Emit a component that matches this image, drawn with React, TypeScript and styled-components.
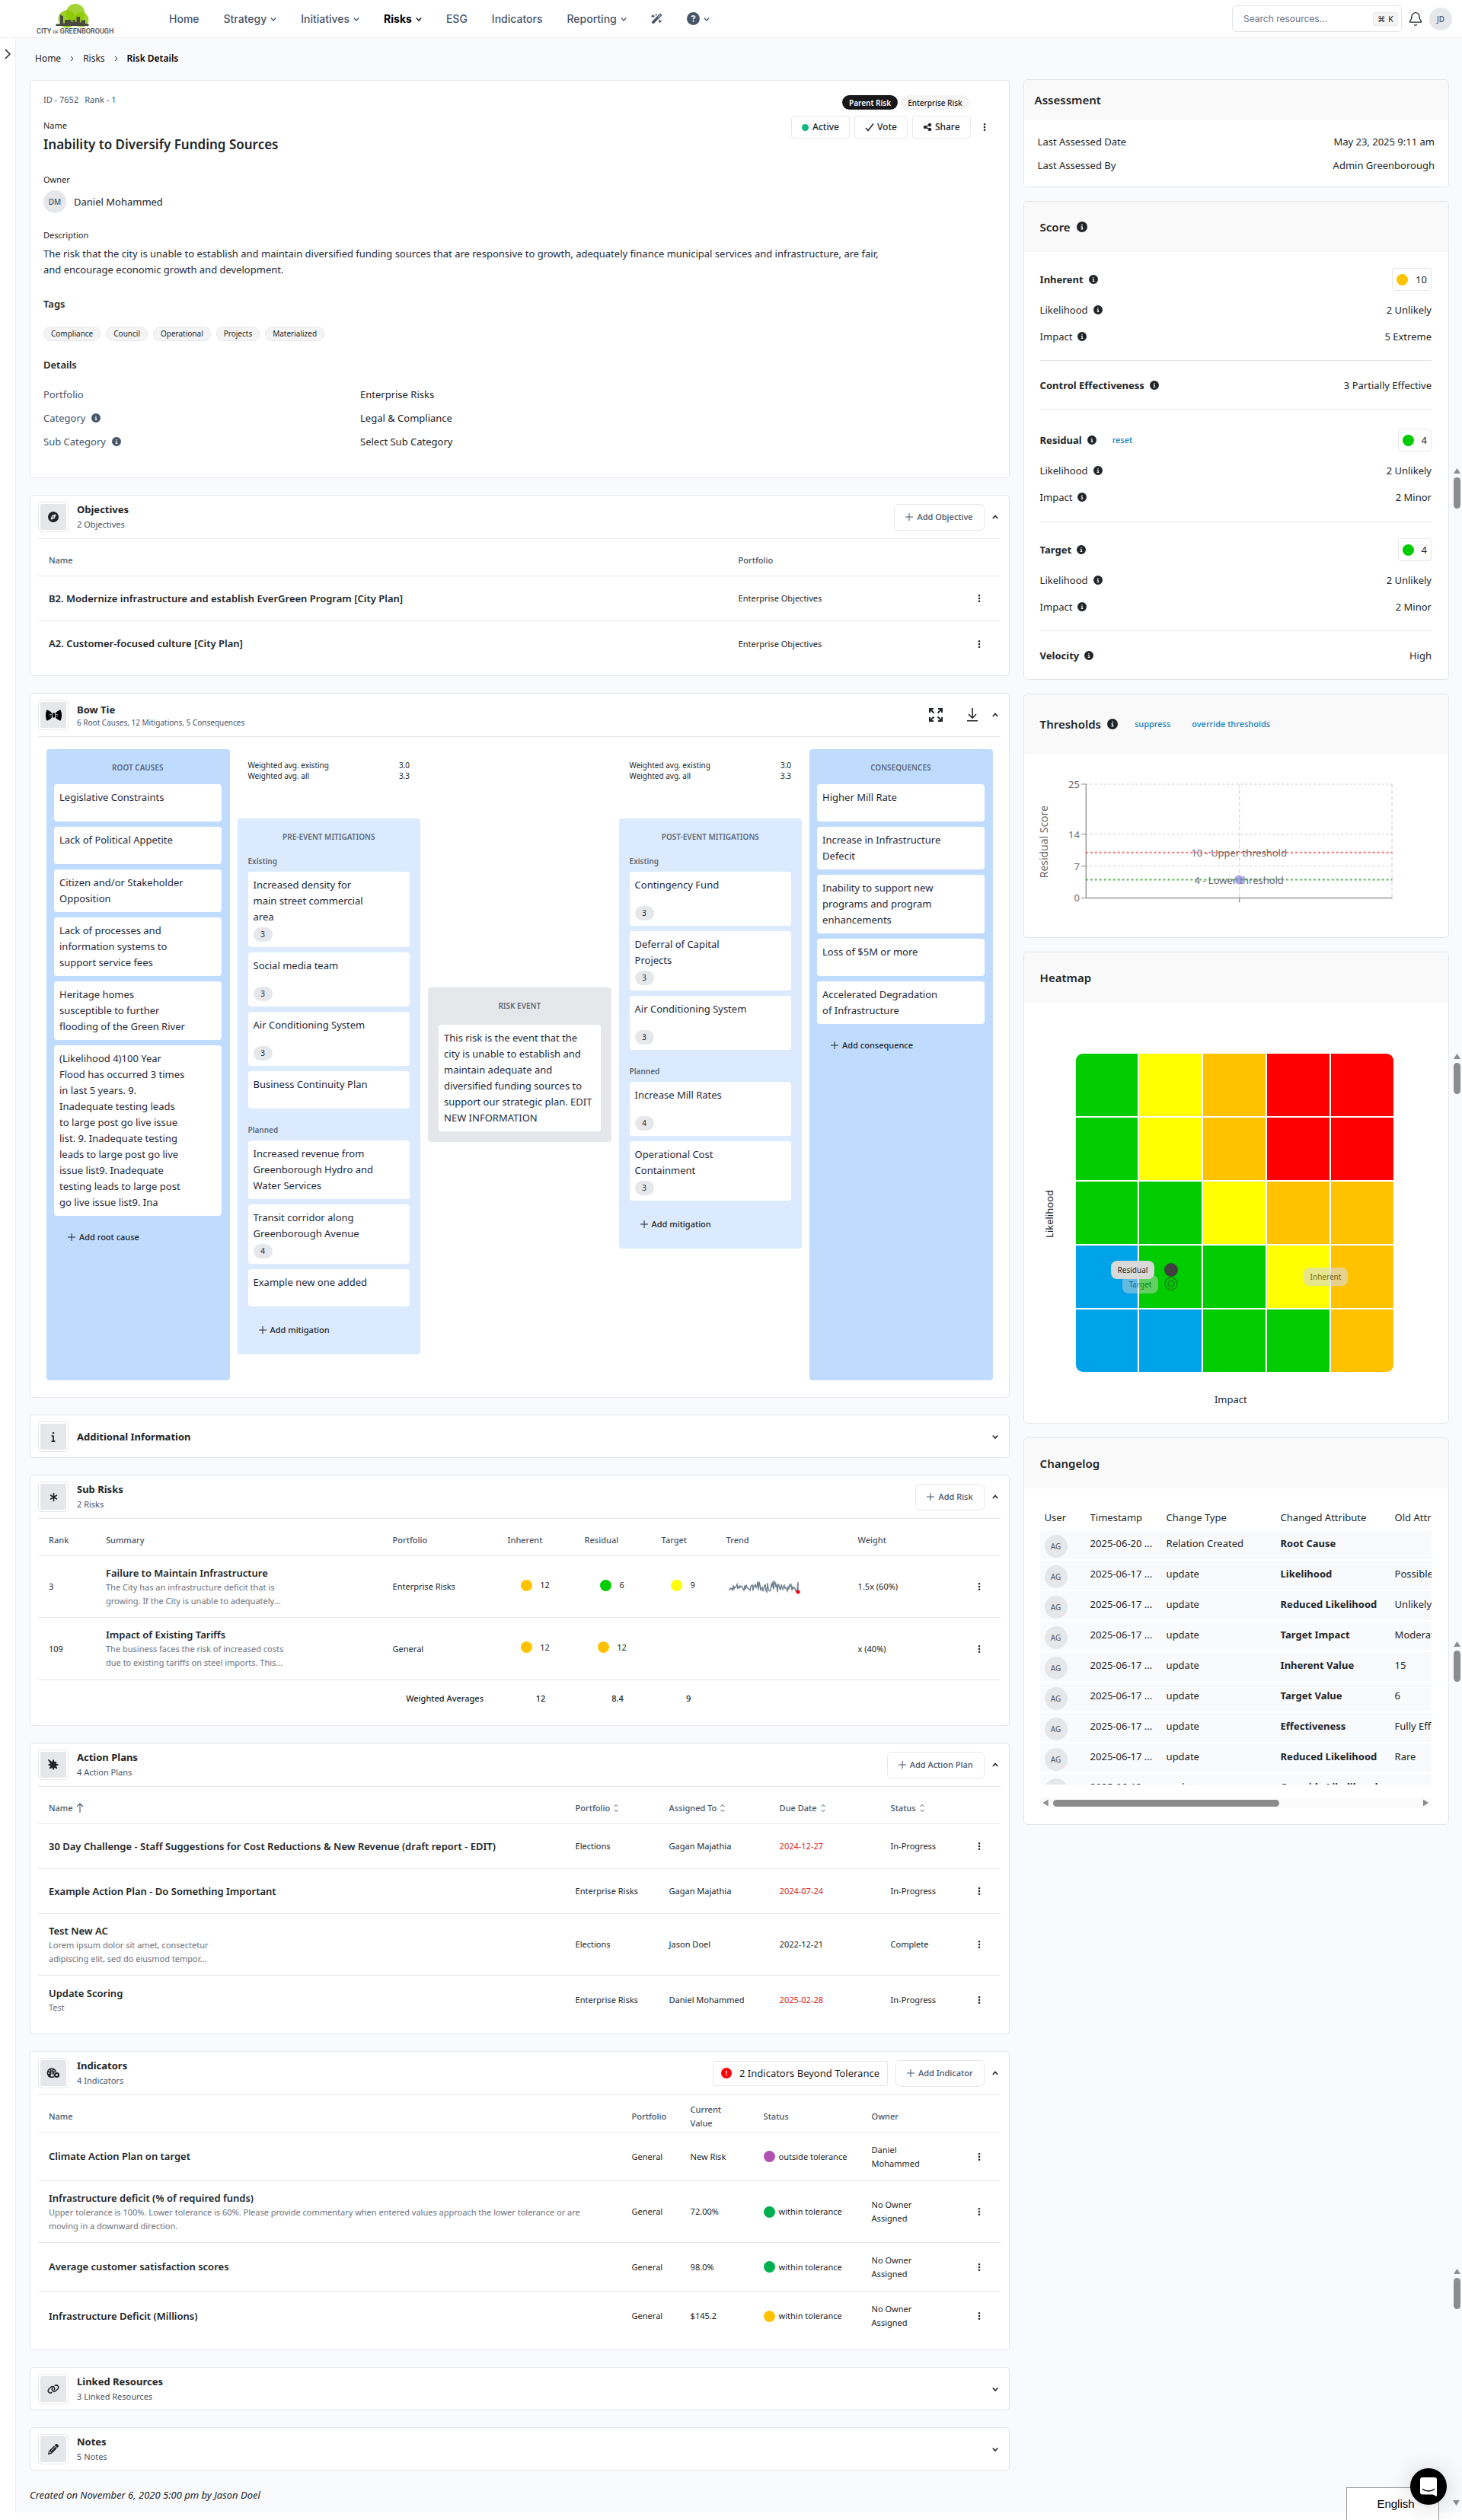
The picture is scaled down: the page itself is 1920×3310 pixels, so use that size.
import React from 'react';
import styled, { createGlobalStyle, css } from 'styled-components';
import {
  FaAsterisk,
  FaBurst,
  FaCircleExclamation,
  FaCircleInfo,
  FaCircleQuestion,
  FaCompass,
  FaEllipsisVertical,
  FaInfo,
  FaLink,
  FaPencil,
  FaShareNodes,
  FaWandMagicSparkles,
} from 'react-icons/fa6';
import { Bell } from 'lucide-react';

/* ---------- theme ---------- */

const c = {
  ink: '#212529',
  slate: '#475569',
  muted: '#6b7280',
  line: '#e5e7eb',
  page: '#f9fafc',
  link: '#0f80c1',
  gray: '#e5e7eb',
  green: '#00cc00',
  yellow: '#ffff00',
  amber: '#ffc200',
  red: '#ff0000',
  blue: '#00a2e8',
};

const GlobalStyle = createGlobalStyle`
  *, *::before, *::after { box-sizing: border-box; }
  body {
    margin: 0;
    background: #fff;
    color: ${c.ink};
    font-family: 'Noto Sans', 'Open Sans', sans-serif;
    font-size: 13px;
    line-height: 20px;
  }
  h1, h2, h3, p, dl, dd, ul { margin: 0; padding: 0; }
  ul { list-style: none; }
  a { color: inherit; text-decoration: none; }
  button, input { font: inherit; color: inherit; }
  svg { display: block; flex: none; }
`;

/* ---------- header ---------- */

const TopBar = styled.header`
  display: flex;
  align-items: center;
  height: 50px;
  padding: 0 13px 0 47px;
  background: #fff;
  border-bottom: 1px solid #eceef1;
`;

const NavList = styled.nav`
  display: flex;
  align-items: center;
  gap: 32px;
  margin-left: 75px;
  font-family: Inter, 'Liberation Sans', sans-serif;
  font-size: 14px;
  font-weight: 500;
  color: ${c.slate};
`;

const NavLink = styled.a<{ $active?: boolean }>`
  display: flex;
  align-items: center;
  gap: 5px;
  ${(p) => p.$active && css`color: #000; font-weight: 700;`}
`;

const TopTools = styled.div`
  display: flex;
  align-items: center;
  gap: 8px;
  margin-left: auto;
`;

const SearchBox = styled.label`
  display: flex;
  align-items: center;
  width: 223px;
  height: 35px;
  padding: 0 4px 0 14px;
  border: 1px solid #e2e4e8;
  border-radius: 6px;
  background: #fff;
`;

const SearchInput = styled.input`
  flex: 1;
  min-width: 0;
  padding: 0;
  border: 0;
  outline: 0;
  background: none;
  font-family: Inter, sans-serif;
  font-size: 12px;
  &::placeholder { color: #6b7280; opacity: 1; }
`;

const Shortcut = styled.kbd`
  display: flex;
  align-items: center;
  gap: 4px;
  height: 18px;
  padding: 0 5px;
  border: 1px solid ${c.line};
  border-radius: 3px;
  background: #f4f4f5;
  font-family: Inter, sans-serif;
  font-size: 10px;
`;

const IconButton = styled.button`
  display: inline-flex;
  align-items: center;
  justify-content: center;
  padding: 0;
  border: 0;
  background: none;
  cursor: pointer;
`;

const Avatar = styled.span<{ $small?: boolean }>`
  display: inline-flex;
  align-items: center;
  justify-content: center;
  flex: none;
  width: 30px;
  height: 30px;
  border-radius: 50%;
  background: #e5e7eb;
  color: ${(p) => (p.$small ? '#555' : c.slate)};
  font-size: 10px;
  font-weight: ${(p) => (p.$small ? 400 : 500)};
  line-height: 12px;
`;

/* ---------- page frame ---------- */

const Frame = styled.div`
  display: flex;
  background: ${c.page};
  margin-bottom: 10px;
`;

const Rail = styled.aside`
  flex: none;
  width: 21px;
  padding-top: 13px;
  background: #fff;
  border-right: 1px solid #eceef1;
  text-align: center;
`;

const Content = styled.main`
  flex: 1;
  min-width: 0;
  padding: 0 17px 13px 18px;
`;

const Crumbs = styled.nav`
  display: flex;
  align-items: center;
  gap: 12px;
  height: 54px;
  padding-left: 7px;
  font-size: 12px;
  color: #111827;
`;

const CrumbHere = styled.span`
  font-weight: 600;
  color: #000;
`;

const Columns = styled.div`
  display: grid;
  grid-template-columns: minmax(0, 23fr) minmax(0, 10fr);
  gap: 18px;
  align-items: start;
`;

const MainCol = styled.div`
  display: flex;
  flex-direction: column;
  gap: 22px;
  padding-top: 1px;
`;

const SideCol = styled.div`
  display: flex;
  flex-direction: column;
  gap: 18px;
`;

const Card = styled.section`
  background: #fff;
  border: 1px solid ${c.line};
  border-radius: 5px;
`;

/* ---------- summary card ---------- */

const Summary = styled(Card)`
  padding: 15px 17px 32px;
`;

const SummaryTop = styled.div`
  display: flex;
  justify-content: space-between;
`;

const MetaLine = styled.p`
  display: flex;
  gap: 8px;
  color: ${c.slate};
  font-size: 11px;
`;

const FieldLabel = styled.p<{ $gap: number }>`
  margin-top: ${(p) => p.$gap}px;
  font-size: 11px;
`;

const RiskTitle = styled.h1`
  margin-top: 3px;
  font-size: 17px;
  font-weight: 600;
  line-height: 24px;
`;

const Actions = styled.div`
  display: flex;
  flex-direction: column;
  align-items: flex-end;
  gap: 8px;
  padding: 4px 3px 0 0;
`;

const PillRow = styled.div`
  display: flex;
  gap: 4px;
  padding-right: 32px;
`;

const Pill = styled.span<{ $dark?: boolean }>`
  display: inline-flex;
  align-items: center;
  height: 19px;
  padding: 0 9px;
  border-radius: 10px;
  background: ${(p) => (p.$dark ? '#18181b' : '#f4f4f5')};
  color: ${(p) => (p.$dark ? '#fff' : '#18181b')};
  font-size: 10px;
  font-weight: ${(p) => (p.$dark ? 600 : 500)};
`;

const ButtonRow = styled.div`
  display: flex;
  align-items: center;
  gap: 6px;
`;

const SmallButton = styled.button`
  display: flex;
  align-items: center;
  gap: 4px;
  height: 30px;
  padding: 0 13px;
  border: 1px solid ${c.line};
  border-radius: 4px;
  background: #fff;
  font-size: 12px;
  font-weight: 500;
  cursor: pointer;
`;

const StatusDot = styled.span`
  width: 9px;
  height: 9px;
  margin-right: 1px;
  border-radius: 50%;
  background: #10b981;
`;

const MoreButton = styled(IconButton)`
  width: 24px;
  height: 24px;
`;

const OwnerRow = styled.div`
  display: flex;
  align-items: center;
  gap: 10px;
  margin-top: 4px;
`;

const Description = styled.p`
  max-width: 1115px;
  margin-top: 4px;
  color: #1e293b;
  line-height: 21px;
`;

const SmallHeading = styled.h2<{ $gap: number }>`
  margin-top: ${(p) => p.$gap}px;
  font-size: 13px;
  font-weight: 600;
`;

const ChipList = styled.ul`
  display: flex;
  gap: 7px;
  margin-top: 20px;
`;

const Chip = styled.li`
  height: 19px;
  padding: 0 9px;
  border: 1px solid ${c.line};
  border-radius: 10px;
  background: #f4f4f5;
  font-size: 10px;
  line-height: 17px;
`;

const DetailList = styled.dl`
  display: grid;
  grid-template-columns: 416px 1fr;
  grid-auto-rows: 31px;
  align-items: center;
  margin-top: 13px;
`;

const Term = styled.dt`
  display: flex;
  align-items: center;
  gap: 8px;
  color: ${c.slate};
`;

/* ---------- collapsible panel ---------- */

const Panel = styled(Card)<{ $open?: boolean }>`
  padding: 0 11px ${(p) => (p.$open ? 12 : 0)}px 10px;
`;

const PanelHead = styled.div<{ $open?: boolean }>`
  display: flex;
  align-items: center;
  gap: 11px;
  padding: 8px 0 ${(p) => (p.$open ? 8 : 7)}px;
  ${(p) => p.$open && css`border-bottom: 1px solid ${c.line};`}
`;

const IconTile = styled.span`
  display: flex;
  flex: none;
  align-items: center;
  justify-content: center;
  width: 40px;
  height: 40px;
  border: 1px solid ${c.line};
  border-radius: 5px;
  background: #e5e7eb;
  box-shadow: inset 0 0 0 2px #fff;
`;

const PanelTitle = styled.h2`
  font-size: 13px;
  font-weight: 700;
`;

const PanelNote = styled.p<{ $tight?: boolean }>`
  font-size: ${(p) => (p.$tight ? 10 : 11)}px;
  line-height: ${(p) => (p.$tight ? 15 : 20)}px;
  color: ${c.slate};
`;

const PanelTools = styled.div`
  display: flex;
  align-items: center;
  gap: 8px;
  margin-left: auto;
`;

const AddButton = styled.button`
  display: flex;
  align-items: center;
  gap: 5px;
  height: 35px;
  padding: 0 14px;
  border: 1px solid ${c.line};
  border-radius: 6px;
  background: #fff;
  color: ${c.slate};
  font-size: 11px;
  font-weight: 500;
  cursor: pointer;
`;

const AlertTag = styled.span`
  display: flex;
  align-items: center;
  gap: 10px;
  height: 33px;
  margin-right: 2px;
  padding: 0 10px;
  border: 1px solid ${c.line};
  border-radius: 3px;
  font-size: 13px;
`;

const Toggle = styled(IconButton)`
  width: 13px;
  height: 24px;
`;

const ToolIcon = styled(IconButton)`
  width: 32px;
  height: 32px;
  margin-right: 8px;
  &:nth-child(2) { margin-right: 0; }
`;

/* ---------- tables ---------- */

const Grid = styled.table`
  width: 100%;
  table-layout: fixed;
  border-collapse: separate;
  border-spacing: 0;
  font-size: 11px;
  line-height: 18px;
`;

const Col = styled.col<{ $w?: string }>`
  width: ${(p) => p.$w ?? 'auto'};
`;

const Th = styled.th`
  height: 49px;
  padding: 7px 14px 0;
  border-bottom: 1px solid ${c.line};
  color: ${c.slate};
  font-weight: 500;
  text-align: left;
`;

const Td = styled.td<{ $h: number; $last?: boolean; $center?: boolean }>`
  height: ${(p) => p.$h}px;
  padding: 0 ${(p) => (p.$center ? 0 : 14)}px;
  text-align: ${(p) => (p.$center ? 'center' : 'left')};
  ${(p) => !p.$last && css`border-bottom: 1px solid ${c.line};`}
`;

const FootTd = styled.td`
  height: 47px;
  padding: 0 0 0 14px;
  font-weight: 500;
  text-align: center;
`;

const RowName = styled.a`
  font-size: 13px;
  font-weight: 600;
`;

const RowNote = styled.p<{ $w?: number }>`
  max-width: ${(p) => (p.$w ? `${p.$w}px` : 'none')};
  color: ${c.muted};
`;

const RedText = styled.span`
  color: #dc2626;
`;

const OwnerName = styled.span`
  white-space: pre-line;
`;

const SortLabel = styled.span`
  display: flex;
  align-items: center;
  gap: 4px;
`;

const Score = styled.span`
  display: inline-flex;
  align-items: center;
  gap: 10px;
`;

const Dot = styled.span<{ $color: string }>`
  flex: none;
  width: 15px;
  height: 15px;
  border-radius: 50%;
  background: ${(p) => p.$color};
`;

const StatusCell = styled.span`
  display: flex;
  align-items: center;
  gap: 5px;
  white-space: nowrap;
`;

/* ---------- bow tie ---------- */

const Board = styled.div`
  display: grid;
  grid-template-columns: repeat(5, minmax(0, 1fr));
  gap: 10px;
  padding: 16px 10px 10px 11px;
`;

const Lane = styled.div<{ $tone: 'strong' | 'soft' | 'gray' }>`
  padding: ${(p) => (p.$tone === 'strong' ? '14px 11px 14px 10px' : '14px')};
  border-radius: 4px;
  background: ${(p) => ({ strong: '#bfdbfe', soft: '#dbeafe', gray: '#e5e7eb' })[p.$tone]};
  ${(p) => p.$tone === 'gray' && css`align-self: center;`}
`;

const SplitLane = styled.div`
  padding-bottom: 34px;
`;

const LaneTitle = styled.h3<{ $gap: number }>`
  margin-bottom: ${(p) => p.$gap}px;
  color: #5f6b7a;
  font-size: 10px;
  font-weight: 600;
  text-align: center;
`;

const LaneGroup = styled.p<{ $first?: boolean }>`
  margin: ${(p) => (p.$first ? 0 : 18)}px 0 4px;
  color: #5f6b7a;
  font-size: 10px;
  font-weight: 600;
`;

const Averages = styled.dl`
  display: grid;
  grid-template-columns: 1fr auto;
  align-content: start;
  height: 91px;
  padding: 14px 14px 0;
  font-size: 10px;
  line-height: 14px;
`;

const NoteList = styled.ul`
  display: flex;
  flex-direction: column;
  gap: 7px;
`;

const Note = styled.li`
  padding: 7px;
  border-radius: 4px;
  background: #fff;
  color: #1e293b;
  line-height: 21px;
  white-space: pre-line;
`;

const NoteText = styled.p`
  min-height: 35px;
`;

const Count = styled.span`
  display: block;
  width: 25px;
  height: 19px;
  margin-top: 3px;
  border-radius: 10px;
  background: ${c.gray};
  font-size: 10px;
  line-height: 19px;
  text-align: center;
`;

const LaneAdd = styled.button<{ $wide?: boolean }>`
  display: flex;
  align-items: center;
  gap: 5px;
  height: 36px;
  margin-top: ${(p) => (p.$wide ? 10 : 13)}px;
  padding: 0 ${(p) => (p.$wide ? 18 : 14)}px;
  border: 0;
  background: none;
  font-size: 11px;
  font-weight: 500;
  cursor: pointer;
`;

/* ---------- side cards ---------- */

const SideHead = styled.div<{ $h: number; $indent?: number }>`
  display: flex;
  align-items: center;
  gap: 8px;
  height: ${(p) => p.$h}px;
  padding: 0 22px 0 ${(p) => p.$indent ?? 21}px;
  border-radius: 5px 5px 0 0;
  background: #f9f9f9;
`;

const SideTitle = styled.h2`
  font-size: 15px;
  font-weight: 600;
`;

const SideLink = styled.a`
  margin-left: 14px;
  color: ${c.link};
  font-size: 11px;
  font-weight: 500;
  & + & { margin-left: 20px; }
`;

const SideBody = styled.div`
  padding: 0 22px 0 21px;
`;

const AssessBody = styled.div`
  padding: 13px 18px 13px;
`;

const Pair = styled.div<{ $h: number }>`
  display: flex;
  align-items: center;
  justify-content: space-between;
  height: ${(p) => p.$h}px;
`;

const PairLabel = styled.span<{ $bold?: boolean }>`
  display: flex;
  align-items: center;
  gap: 7px;
  font-weight: ${(p) => (p.$bold ? 700 : 400)};
`;

const ScoreGroup = styled.div<{ $top: number; $bottom: number; $last?: boolean }>`
  padding: ${(p) => p.$top}px 0 ${(p) => p.$bottom}px;
  ${(p) => !p.$last && css`border-bottom: 1px solid ${c.line};`}
`;

const ScoreBadge = styled.span`
  display: flex;
  align-items: center;
  gap: 10px;
  height: 30px;
  padding: 0 5px;
  border: 1px solid ${c.line};
  border-radius: 4px;
`;

const ChartBox = styled.div`
  height: 241px;
  padding-top: 20px;
`;

const Heat = styled.div`
  display: grid;
  grid-template-columns: 24px 1fr;
  column-gap: 23px;
  padding: 67px 50px 0 0;
`;

const AxisY = styled.span`
  justify-self: center;
  align-self: center;
  padding-bottom: 2px;
  writing-mode: vertical-rl;
  transform: rotate(180deg);
`;

const AxisX = styled.p`
  grid-column: 2;
  padding: 26px 10px 21px 0;
  text-align: center;
`;

const HeatGrid = styled.div`
  position: relative;
  display: grid;
  grid-template-columns: repeat(5, 1fr);
  grid-auto-rows: 82px;
  gap: 2px;
  border-radius: 9px;
  overflow: hidden;
`;

const Cell = styled.span<{ $color: string }>`
  background: ${(p) => p.$color};
`;

const Marker = styled.span<{ $x: number; $y: number; $fade?: number }>`
  position: absolute;
  left: ${(p) => p.$x}px;
  top: ${(p) => p.$y}px;
  opacity: ${(p) => p.$fade ?? 1};
`;

const MarkerTag = styled(Marker)`
  padding: 2px 9px;
  border-radius: 8px;
  background: #d9d9d9;
  font-size: 10px;
`;

const LogView = styled.div`
  height: 389px;
  padding-top: 21px;
  overflow: hidden;
`;

const LogTable = styled.table`
  width: 700px;
  table-layout: fixed;
  border-collapse: separate;
  border-spacing: 0 2px;
`;

const LogTh = styled.th`
  height: 30px;
  padding: 0 6px;
  font-weight: 400;
  text-align: left;
  white-space: nowrap;
`;

const LogTd = styled.td<{ $bold?: boolean; $face?: boolean }>`
  height: 38px;
  padding: ${(p) => (p.$face ? 6 : 7)}px 6px 0;
  background: ${c.page};
  font-weight: ${(p) => (p.$bold ? 700 : 400)};
  line-height: ${(p) => (p.$face ? 0 : '20px')};
  vertical-align: top;
  white-space: nowrap;
`;

const ScrollTrack = styled.div`
  display: flex;
  align-items: center;
  gap: 6px;
  height: 14px;
  margin: 17px 0 21px;
  padding: 0 4px;
  background: #fbfbfb;
`;

const ScrollLane = styled.span`
  flex: 1;
`;

const ScrollBar = styled.span`
  display: block;
  width: 62%;
  height: 9px;
  border-radius: 5px;
  background: #8c8c8c;
`;

const Tri = styled.span<{ $dir: 'up' | 'down' | 'left' | 'right' }>`
  display: block;
  width: ${(p) => (p.$dir === 'up' || p.$dir === 'down' ? 9 : 7)}px;
  height: ${(p) => (p.$dir === 'up' || p.$dir === 'down' ? 7 : 9)}px;
  background: #8c8c8c;
  clip-path: ${(p) =>
    ({
      up: 'polygon(50% 0, 100% 100%, 0 100%)',
      down: 'polygon(0 0, 100% 0, 50% 100%)',
      left: 'polygon(100% 0, 100% 100%, 0 50%)',
      right: 'polygon(0 0, 100% 50%, 0 100%)',
    })[p.$dir]};
`;

/* ---------- page overlays ---------- */

const PageScroll = styled.div<{ $top: number }>`
  position: absolute;
  top: ${(p) => p.$top}px;
  right: 2px;
  display: flex;
  flex-direction: column;
  align-items: center;
  gap: 5px;
`;

const PageThumb = styled.span`
  width: 9px;
  height: 41px;
  border-radius: 5px;
  background: #8c8c8c;
`;

const ScrollEnd = styled.div`
  position: fixed;
  right: 3px;
  bottom: 19px;
`;

const Created = styled.p`
  font-size: 13px;
  font-style: italic;
`;

const Language = styled.button`
  position: fixed;
  right: 30px;
  bottom: -1px;
  width: 122px;
  height: 44px;
  padding: 0 0 0 8px;
  border: 1px solid #9a9a9a;
  background: #fff;
  color: #000;
  font-family: 'Liberation Sans', sans-serif;
  font-size: 15px;
`;

const Chat = styled.button`
  position: fixed;
  right: 20px;
  bottom: 20px;
  display: flex;
  align-items: center;
  justify-content: center;
  width: 48px;
  height: 48px;
  border: 0;
  border-radius: 50%;
  background: #000;
  box-shadow: 0 1px 6px rgba(0, 0, 0, 0.06), 0 2px 32px rgba(0, 0, 0, 0.16);
`;

/* ---------- drawings ---------- */

const LogoText = styled.text`
  font-family: 'Roboto', sans-serif;
  font-size: 9px;
  font-weight: 500;
  fill: #4a4a4a;
`;

const Logo = () => (
  <svg width="100" height="44" viewBox="0 0 100 44" overflow="visible" role="img" aria-label="City of Greenborough">
    <g fill="#8cc800">
      <circle cx="41" cy="22" r="11.5" opacity=".85" />
      <circle cx="52" cy="14.5" r="12.5" opacity=".8" />
      <circle cx="59.5" cy="23" r="10" opacity=".8" />
    </g>
    <path
      fill="#4a4a42"
      d="M27 28.5h5V16l4 2.5v9h2V23h8.5v3h2v-3h3v3h2v-7H58v7.500h1.500v-3H65V28l4.500.5V31H26z"
    />
    <LogoText x="1" y="41">
      CITY
      <tspan fontSize="6" dx="2">
        OF
      </tspan>
      <tspan dx="2">GREENBOROUGH</tspan>
    </LogoText>
  </svg>
);

const Chevron = ({ up, size = 8, weight = 1.6 }: { up?: boolean; size?: number; weight?: number }) => (
  <svg width={size} height={size} viewBox="0 0 8 8" fill="none" stroke="currentColor" strokeWidth={weight}>
    <path d={up ? 'M.8 6 4 2.500 7.200 6' : 'M.8 2.500 4 6l3.200-3.500'} />
  </svg>
);

const ChevronRight = ({ w, h, weight }: { w: number; h: number; weight: number }) => (
  <svg width={w} height={h} viewBox={`0 0 ${w} ${h}`} fill="none" stroke="currentColor" strokeWidth={weight}>
    <path d={`M1 1 L${w - 1} ${h / 2} L1 ${h - 1}`} />
  </svg>
);

const Plus = () => (
  <svg width="10" height="10" viewBox="0 0 10 10" stroke="currentColor" strokeWidth="1">
    <path d="M5 0v10M0 5h10" />
  </svg>
);

const Check = () => (
  <svg width="12" height="12" viewBox="0 0 12 12" fill="none" stroke="currentColor" strokeWidth="1.5">
    <path d="M1 7l3 3.500L11 1.500" />
  </svg>
);

const SortMark = () => (
  <svg width="8" height="12" viewBox="0 0 8 12" fill="none" stroke="currentColor" strokeWidth="1">
    <path d="M1.500 4 4 1.500 6.500 4M1.500 8 4 10.500 6.500 8" />
  </svg>
);

const SortUp = () => (
  <svg width="10" height="13" viewBox="0 0 10 13" fill="none" stroke="currentColor" strokeWidth="1.1">
    <path d="M5 13V1M1 5l4-4 4 4" />
  </svg>
);

const ExpandIcon = () => (
  <svg width="18" height="18" viewBox="0 0 18 18" fill="none" stroke="currentColor" strokeWidth="2">
    <path d="M1 6V1h5M1 1l5.500 5.500M12 1h5v5M17 1l-5.500 5.500M1 12v5h5M1 17l5.500-5.500M17 12v5h-5M17 17l-5.500-5.500" />
  </svg>
);

const DownloadIcon = () => (
  <svg width="16" height="18" viewBox="0 0 16 18" fill="none" stroke="currentColor" strokeWidth="1.6">
    <path d="M8 0v13M3 8l5 5.200L13 8M1 16.800h14" />
  </svg>
);

const BowTieIcon = () => (
  <svg width="21" height="15" viewBox="0 0 21 15" fill="#000">
    <path d="M1.500.5C3 .3 7 3 8 4.500v6C7 12 3 14.700 1.500 14.500.3 12 0 10 0 7.500S.3 3 1.500.5zM19.500.5C18 .3 14 3 13 4.500v6c1 1.500 5 4.200 6.500 4 1.200-2.500 1.500-4.500 1.500-7s-.3-4.500-1.500-7z" />
    <rect x="8.8" y="4.5" width="3.4" height="6" rx="1" />
    <path d="M5 6.500h3M13 6.500h3M5 8.800h3M13 8.800h3" stroke="#e5e7eb" strokeWidth=".6" />
  </svg>
);

const GaugeIcon = () => (
  <svg width="18" height="14" viewBox="0 0 18 14">
    <circle cx="7" cy="6.8" r="6.5" fill="#212529" />
    <g fill="#e5e7eb">
      <circle cx="3" cy="7" r=".9" />
      <circle cx="4.2" cy="3.8" r=".9" />
      <circle cx="7" cy="2.5" r=".9" />
      <circle cx="10" cy="3.8" r=".9" />
      <path d="M6.500 4.500h1.200v4a1.600 1.600 0 1 1-1.200 0z" />
    </g>
    <circle cx="13.5" cy="9.5" r="4.4" fill="#e5e7eb" />
    <circle cx="13.5" cy="9.5" r="3.6" fill="#212529" />
    <circle cx="13.5" cy="9.5" r="1.4" fill="#e5e7eb" />
  </svg>
);

const ChatIcon = () => (
  <svg width="22" height="25" viewBox="0 0 22 25">
    <path d="M3 0h16a3 3 0 0 1 3 3v22l-5.500-2.500H3a3 3 0 0 1-3-3V3a3 3 0 0 1 3-3z" fill="#fff" />
    <path d="M3.500 15.500c4 3.300 11 3.300 15 0" fill="none" stroke="#000" strokeWidth="1.5" strokeLinecap="round" />
  </svg>
);

const Target = () => (
  <svg width="18" height="18" viewBox="0 0 18 18" fill="none" stroke="#404040">
    <circle cx="9" cy="9" r="8" strokeWidth="2" />
    <circle cx="9" cy="9" r="3.8" strokeWidth="2.2" />
  </svg>
);

/* A repeatable noisy series: wider swings in the middle of the period. */
const trend = (() => {
  let seed = 17;
  return Array.from({ length: 90 }, (_, i) => {
    seed = (seed * 1103 + 377) % 9973;
    const noise = seed / 9973 - 0.5;
    const swing = i > 36 && i < 64 ? 15 : 9;
    return (i > 36 && i < 64 ? 10 : 11.5) + noise * swing;
  });
})();

const Sparkline = () => (
  <svg width="97" height="20" viewBox="-4 0 97 20" fill="none">
    <polyline
      points={trend.map((y, i) => `${i},${y.toFixed(1)}`).join(' ') + ' 90,4 90,17'}
      stroke="#708090"
      strokeWidth="1.4"
    />
    <circle cx="90" cy="17" r="2.5" fill="red" />
  </svg>
);

const AxisText = styled.text<{ $large?: boolean }>`
  fill: #6b6b6b;
  font-size: ${(p) => (p.$large ? 14 : 13)}px;
`;

const ThresholdChart = () => {
  const top = 20;
  const bottom = 170;
  const yOf = (v: number) => bottom - (v * (bottom - top)) / 25;
  return (
    <svg width="100%" viewBox="0 0 516 200" overflow="visible" role="img" aria-label="Residual score thresholds">
      {[25, 14, 7].map((v) => (
        <path key={v} d={`M60 ${yOf(v)}H464`} stroke="#ddd" strokeWidth="1.5" strokeDasharray="3 3" />
      ))}
      <path d={`M262.500 ${top}V${bottom}M463.500 ${top}V${bottom}`} stroke="#ccc" strokeDasharray="5 3" />
      <path d={`M60.500 ${top}V${bottom}H464M262.500 ${bottom}v6`} stroke="#999" fill="none" strokeWidth="1.5" />
      {[25, 14, 7, 0].map((v) => (
        <React.Fragment key={v}>
          <path d={`M54 ${yOf(v)}h6`} stroke="#888" />
          <AxisText x="52" y={yOf(v) + 5} textAnchor="end">
            {v}
          </AxisText>
        </React.Fragment>
      ))}
      <path d={`M60 ${yOf(10)}H464`} stroke="#f87171" strokeWidth="2" strokeDasharray="3 3" />
      <path d={`M60 ${yOf(4)}H464`} stroke="#5cb85c" strokeWidth="2" strokeDasharray="3 3" />
      <AxisText x="262" y={yOf(10) + 5} textAnchor="middle">
        10 - Upper threshold
      </AxisText>
      <AxisText x="262" y={yOf(4) + 5} textAnchor="middle">
        4 - Lower threshold
      </AxisText>
      <circle cx="262" cy={yOf(4)} r="6" fill="#8884d8" opacity=".7" />
      <AxisText x="-96" y="10" textAnchor="middle" transform="rotate(-90)" $large>
        Residual Score
      </AxisText>
    </svg>
  );
};

/* ---------- shared parts ---------- */

const More = () => (
  <MoreButton type="button" aria-label="More options">
    <FaEllipsisVertical size={12} />
  </MoreButton>
);

const Info = ({ size = 12 }: { size?: number }) => <FaCircleInfo size={size} aria-hidden />;

const PanelHeader = ({
  icon,
  title,
  note,
  tight,
  open,
  children,
}: {
  icon: React.ReactNode;
  title: string;
  note?: string;
  tight?: boolean;
  open?: boolean;
  children?: React.ReactNode;
}) => (
  <PanelHead $open={open}>
    <IconTile>{icon}</IconTile>
    <div>
      <PanelTitle>{title}</PanelTitle>
      {note && <PanelNote $tight={tight}>{note}</PanelNote>}
    </div>
    <PanelTools>
      {children}
      <Toggle type="button" aria-label={open ? 'Collapse' : 'Expand'}>
        <Chevron up={open} />
      </Toggle>
    </PanelTools>
  </PanelHead>
);

const Add = ({ label }: { label: string }) => (
  <AddButton type="button">
    <Plus />
    {label}
  </AddButton>
);

const MoreCell = ({ h, last }: { h: number; last?: boolean }) => (
  <Td $h={h} $last={last} $center>
    <More />
  </Td>
);

/* ---------- sections ---------- */

const navItems: [string, boolean][] = [
  ['Home', false],
  ['Strategy', true],
  ['Initiatives', true],
  ['Risks', true],
  ['ESG', false],
  ['Indicators', false],
  ['Reporting', true],
];

const Header = () => (
  <TopBar>
    <a href="#home">
      <Logo />
    </a>
    <NavList aria-label="Main">
      {navItems.map(([label, menu]) => (
        <NavLink key={label} href={`#${label.toLowerCase()}`} $active={label === 'Risks'}>
          {label}
          {menu && <Chevron size={8} weight={1.2} />}
        </NavLink>
      ))}
      <NavLink href="#assistant" aria-label="Assistant">
        <FaWandMagicSparkles size={15} />
      </NavLink>
      <NavLink href="#help" aria-label="Help">
        <FaCircleQuestion size={17} />
        <Chevron size={8} weight={1.2} />
      </NavLink>
    </NavList>
    <TopTools>
      <SearchBox>
        <SearchInput type="search" placeholder="Search resources..." aria-label="Search resources" />
        <Shortcut>
          <span>⌘</span>K
        </Shortcut>
      </SearchBox>
      <IconButton type="button" aria-label="Notifications">
        <Bell size={20} strokeWidth={1.6} />
      </IconButton>
      <Avatar>JD</Avatar>
    </TopTools>
  </TopBar>
);

const SummaryCard = () => (
  <Summary>
    <SummaryTop>
      <div>
        <MetaLine>
          <span>ID - 7652</span>
          <span>Rank - 1</span>
        </MetaLine>
        <FieldLabel $gap={14}>Name</FieldLabel>
        <RiskTitle>Inability to Diversify Funding Sources</RiskTitle>
      </div>
      <Actions>
        <PillRow>
          <Pill $dark>Parent Risk</Pill>
          <Pill>Enterprise Risk</Pill>
        </PillRow>
        <ButtonRow>
          <SmallButton type="button">
            <StatusDot />
            Active
          </SmallButton>
          <SmallButton type="button">
            <Check />
            Vote
          </SmallButton>
          <SmallButton type="button">
            <FaShareNodes size={12} />
            Share
          </SmallButton>
          <More />
        </ButtonRow>
      </Actions>
    </SummaryTop>
    <FieldLabel $gap={24}>Owner</FieldLabel>
    <OwnerRow>
      <Avatar>DM</Avatar>
      Daniel Mohammed
    </OwnerRow>
    <FieldLabel $gap={19}>Description</FieldLabel>
    <Description>
      The risk that the city is unable to establish and maintain diversified funding sources that are responsive to
      growth, adequately finance municipal services and infrastructure, are fair, and encourage economic growth and
      development.
    </Description>
    <SmallHeading $gap={24}>Tags</SmallHeading>
    <ChipList>
      {['Compliance', 'Council', 'Operational', 'Projects', 'Materialized'].map((t) => (
        <Chip key={t}>{t}</Chip>
      ))}
    </ChipList>
    <SmallHeading $gap={21}>Details</SmallHeading>
    <DetailList>
      <Term>Portfolio</Term>
      <dd>Enterprise Risks</dd>
      <Term>
        Category <Info />
      </Term>
      <dd>Legal &amp; Compliance</dd>
      <Term>
        Sub Category <Info />
      </Term>
      <dd>Select Sub Category</dd>
    </DetailList>
  </Summary>
);

const objectives = [
  'B2. Modernize infrastructure and establish EverGreen Program [City Plan]',
  'A2. Customer-focused culture [City Plan]',
];

const Objectives = () => (
  <Panel $open>
    <PanelHeader icon={<FaCompass size={14} />} title="Objectives" note="2 Objectives" open>
      <Add label="Add Objective" />
    </PanelHeader>
    <Grid>
      <colgroup>
        <Col />
        <Col $w="302px" />
        <Col $w="56px" />
      </colgroup>
      <thead>
        <tr>
          <Th>Name</Th>
          <Th>Portfolio</Th>
          <Th aria-label="Options" />
        </tr>
      </thead>
      <tbody>
        {objectives.map((name, i) => (
          <tr key={name}>
            <Td $h={59} $last={i === 1}>
              <RowName href="#objective">{name}</RowName>
            </Td>
            <Td $h={59} $last={i === 1}>
              Enterprise Objectives
            </Td>
            <MoreCell h={59} last={i === 1} />
          </tr>
        ))}
      </tbody>
    </Grid>
  </Panel>
);

type NoteData = { text: string; count?: number };

const Notes = ({ items }: { items: NoteData[] }) => (
  <NoteList>
    {items.map((n) => (
      <Note key={n.text}>
        <NoteText>{n.text}</NoteText>
        {n.count && <Count>{n.count}</Count>}
      </Note>
    ))}
  </NoteList>
);

const rootCauses: NoteData[] = [
  { text: 'Legislative Constraints' },
  { text: 'Lack of Political Appetite' },
  { text: 'Citizen and/or Stakeholder\nOpposition' },
  { text: 'Lack of processes and\ninformation systems to\nsupport service fees' },
  { text: 'Heritage homes\nsusceptible to further\nflooding of the Green River' },
  {
    text: '(Likelihood 4)100 Year\nFlood has occurred 3 times\nin last 5 years. 9.\nInadequate testing leads\nto large post go live issue\nlist. 9. Inadequate testing\nleads to large post go live\nissue list9. Inadequate\ntesting leads to large post\ngo live issue list9. Ina',
  },
];

const consequences: NoteData[] = [
  { text: 'Higher Mill Rate' },
  { text: 'Increase in Infrastructure\nDefecit' },
  { text: 'Inability to support new\nprograms and program\nenhancements' },
  { text: 'Loss of $5M or more' },
  { text: 'Accelerated Degradation\nof Infrastructure' },
];

const MitigationLane = ({ title, existing, planned }: { title: string; existing: NoteData[]; planned: NoteData[] }) => (
  <SplitLane>
    <Averages>
      <dt>Weighted avg. existing</dt>
      <dd>3.0</dd>
      <dt>Weighted avg. all</dt>
      <dd>3.3</dd>
    </Averages>
    <Lane $tone="soft">
      <LaneTitle $gap={12}>{title}</LaneTitle>
      <LaneGroup $first>Existing</LaneGroup>
      <Notes items={existing} />
      <LaneGroup>Planned</LaneGroup>
      <Notes items={planned} />
      <LaneAdd type="button">
        <Plus />
        Add mitigation
      </LaneAdd>
    </Lane>
  </SplitLane>
);

const BowTie = () => (
  <Panel $open>
    <PanelHeader icon={<BowTieIcon />} title="Bow Tie" note="6 Root Causes, 12 Mitigations, 5 Consequences" tight open>
      <ToolIcon type="button" aria-label="Full screen">
        <ExpandIcon />
      </ToolIcon>
      <ToolIcon type="button" aria-label="Download">
        <DownloadIcon />
      </ToolIcon>
    </PanelHeader>
    <Board>
      <Lane $tone="strong">
        <LaneTitle $gap={12}>ROOT CAUSES</LaneTitle>
        <Notes items={rootCauses} />
        <LaneAdd type="button" $wide>
          <Plus />
          Add root cause
        </LaneAdd>
      </Lane>
      <MitigationLane
        title="PRE-EVENT MITIGATIONS"
        existing={[
          { text: 'Increased density for\nmain street commercial\narea', count: 3 },
          { text: 'Social media team', count: 3 },
          { text: 'Air Conditioning System', count: 3 },
          { text: 'Business Continuity Plan' },
        ]}
        planned={[
          { text: 'Increased revenue from\nGreenborough Hydro and\nWater Services' },
          { text: 'Transit corridor along\nGreenborough Avenue', count: 4 },
          { text: 'Example new one added' },
        ]}
      />
      <Lane $tone="gray">
        <LaneTitle $gap={15}>RISK EVENT</LaneTitle>
        <Notes
          items={[
            {
              text: 'This risk is the event that the\ncity is unable to establish and\nmaintain adequate and\ndiversified funding sources to\nsupport our strategic plan. EDIT\nNEW INFORMATION',
            },
          ]}
        />
      </Lane>
      <MitigationLane
        title="POST-EVENT MITIGATIONS"
        existing={[
          { text: 'Contingency Fund', count: 3 },
          { text: 'Deferral of Capital\nProjects', count: 3 },
          { text: 'Air Conditioning System', count: 3 },
        ]}
        planned={[
          { text: 'Increase Mill Rates', count: 4 },
          { text: 'Operational Cost\nContainment', count: 3 },
        ]}
      />
      <Lane $tone="strong">
        <LaneTitle $gap={12}>CONSEQUENCES</LaneTitle>
        <Notes items={consequences} />
        <LaneAdd type="button" $wide>
          <Plus />
          Add consequence
        </LaneAdd>
      </Lane>
    </Board>
  </Panel>
);

const ScoreCell = ({ h, color, value }: { h: number; color?: string; value?: number }) => (
  <Td $h={h} $center>
    {color && (
      <Score>
        <Dot $color={color} />
        {value}
      </Score>
    )}
  </Td>
);

const SubRisks = () => (
  <Panel $open>
    <PanelHeader icon={<FaAsterisk size={13} />} title="Sub Risks" note="2 Risks" open>
      <Add label="Add Risk" />
    </PanelHeader>
    <Grid>
      <colgroup>
        <Col $w="75px" />
        <Col />
        <Col $w="151px" />
        <Col $w="101px" />
        <Col $w="101px" />
        <Col $w="85px" />
        <Col $w="173px" />
        <Col $w="145px" />
        <Col $w="56px" />
      </colgroup>
      <thead>
        <tr>
          {['Rank', 'Summary', 'Portfolio', 'Inherent', 'Residual', 'Target', 'Trend', 'Weight'].map((t) => (
            <Th key={t}>{t}</Th>
          ))}
          <Th aria-label="Options" />
        </tr>
      </thead>
      <tbody>
        <tr>
          <Td $h={81}>3</Td>
          <Td $h={81}>
            <RowName href="#risk">Failure to Maintain Infrastructure</RowName>
            <RowNote $w={250}>The City has an infrastructure deficit that is growing. If the City is unable to adequately...</RowNote>
          </Td>
          <Td $h={81}>Enterprise Risks</Td>
          <ScoreCell h={81} color={c.amber} value={12} />
          <ScoreCell h={81} color={c.green} value={6} />
          <ScoreCell h={81} color={c.yellow} value={9} />
          <Td $h={81}>
            <Sparkline />
          </Td>
          <Td $h={81}>1.5x (60%)</Td>
          <MoreCell h={81} />
        </tr>
        <tr>
          <Td $h={82}>109</Td>
          <Td $h={82}>
            <RowName href="#risk">Impact of Existing Tariffs</RowName>
            <RowNote $w={250}>The business faces the risk of increased costs due to existing tariffs on steel imports. This...</RowNote>
          </Td>
          <Td $h={82}>General</Td>
          <ScoreCell h={82} color={c.amber} value={12} />
          <ScoreCell h={82} color={c.amber} value={12} />
          <ScoreCell h={82} />
          <Td $h={82} />
          <Td $h={82}>x (40%)</Td>
          <MoreCell h={82} />
        </tr>
      </tbody>
      <tfoot>
        <tr>
          <FootTd colSpan={2} />
          <FootTd>Weighted Averages</FootTd>
          <FootTd>12</FootTd>
          <FootTd>8.4</FootTd>
          <FootTd>9</FootTd>
          <FootTd colSpan={3} />
        </tr>
      </tfoot>
    </Grid>
  </Panel>
);

const plans = [
  { h: 59, name: '30 Day Challenge - Staff Suggestions for Cost Reductions & New Revenue (draft report - EDIT)', portfolio: 'Elections', who: 'Gagan Majathia', due: '2024-12-27', late: true, status: 'In-Progress' },
  { h: 59, name: 'Example Action Plan - Do Something Important', portfolio: 'Enterprise Risks', who: 'Gagan Majathia', due: '2024-07-24', late: true, status: 'In-Progress' },
  { h: 81, name: 'Test New AC', note: 'Lorem ipsum dolor sit amet, consectetur adipiscing elit, sed do eiusmod tempor...', portfolio: 'Elections', who: 'Jason Doel', due: '2022-12-21', late: false, status: 'Complete' },
  { h: 64, name: 'Update Scoring', note: 'Test', portfolio: 'Enterprise Risks', who: 'Daniel Mohammed', due: '2025-02-28', late: true, status: 'In-Progress' },
];

const ActionPlans = () => (
  <Panel $open>
    <PanelHeader icon={<FaBurst size={14} />} title="Action Plans" note="4 Action Plans" open>
      <Add label="Add Action Plan" />
    </PanelHeader>
    <Grid>
      <colgroup>
        <Col />
        <Col $w="123px" />
        <Col $w="145px" />
        <Col $w="146px" />
        <Col $w="102px" />
        <Col $w="56px" />
      </colgroup>
      <thead>
        <tr>
          <Th>
            <SortLabel>
              Name <SortUp />
            </SortLabel>
          </Th>
          {['Portfolio', 'Assigned To', 'Due Date', 'Status'].map((t) => (
            <Th key={t}>
              <SortLabel>
                {t} <SortMark />
              </SortLabel>
            </Th>
          ))}
          <Th aria-label="Options" />
        </tr>
      </thead>
      <tbody>
        {plans.map((p, i) => {
          const last = i === plans.length - 1;
          return (
            <tr key={p.name}>
              <Td $h={p.h} $last={last}>
                <RowName href="#plan">{p.name}</RowName>
                {p.note && <RowNote $w={230}>{p.note}</RowNote>}
              </Td>
              <Td $h={p.h} $last={last}>{p.portfolio}</Td>
              <Td $h={p.h} $last={last}>{p.who}</Td>
              <Td $h={p.h} $last={last}>{p.late ? <RedText>{p.due}</RedText> : p.due}</Td>
              <Td $h={p.h} $last={last}>{p.status}</Td>
              <MoreCell h={p.h} last={last} />
            </tr>
          );
        })}
      </tbody>
    </Grid>
  </Panel>
);

const indicators = [
  { h: 64, name: 'Climate Action Plan on target', value: 'New Risk', color: '#b050b0', status: 'outside tolerance', owner: 'Daniel\nMohammed' },
  { h: 81, name: 'Infrastructure deficit (% of required funds)', note: 'Upper tolerance is 100%. Lower tolerance is 60%. Please provide commentary when entered values approach the lower tolerance or are moving in a downward direction.', value: '72.00%', color: '#00b050', status: 'within tolerance', owner: 'No Owner\nAssigned' },
  { h: 64, name: 'Average customer satisfaction scores', value: '98.0%', color: '#00b050', status: 'within tolerance', owner: 'No Owner\nAssigned' },
  { h: 64, name: 'Infrastructure Deficit (Millions)', value: '$145.2', color: c.amber, status: 'within tolerance', owner: 'No Owner\nAssigned' },
];

const Indicators = () => (
  <Panel $open>
    <PanelHeader icon={<GaugeIcon />} title="Indicators" note="4 Indicators" open>
      <AlertTag>
        <FaCircleExclamation size={14} color="red" />
        2 Indicators Beyond Tolerance
      </AlertTag>
      <Add label="Add Indicator" />
    </PanelHeader>
    <Grid>
      <colgroup>
        <Col />
        <Col $w="77px" />
        <Col $w="96px" />
        <Col $w="142px" />
        <Col $w="127px" />
        <Col $w="56px" />
      </colgroup>
      <thead>
        <tr>
          {['Name', 'Portfolio', 'Current Value', 'Status', 'Owner'].map((t) => (
            <Th key={t}>{t}</Th>
          ))}
          <Th aria-label="Options" />
        </tr>
      </thead>
      <tbody>
        {indicators.map((d, i) => {
          const last = i === indicators.length - 1;
          return (
            <tr key={d.name}>
              <Td $h={d.h} $last={last}>
                <RowName href="#indicator">{d.name}</RowName>
                {d.note && <RowNote>{d.note}</RowNote>}
              </Td>
              <Td $h={d.h} $last={last}>General</Td>
              <Td $h={d.h} $last={last}>{d.value}</Td>
              <Td $h={d.h} $last={last}>
                <StatusCell>
                  <Dot $color={d.color} />
                  {d.status}
                </StatusCell>
              </Td>
              <Td $h={d.h} $last={last}>
                <OwnerName>{d.owner}</OwnerName>
              </Td>
              <MoreCell h={d.h} last={last} />
            </tr>
          );
        })}
      </tbody>
    </Grid>
  </Panel>
);

const InfoPair = ({ label, value }: { label: string; value: string }) => (
  <Pair $h={35}>
    <PairLabel>
      {label} <Info />
    </PairLabel>
    <span>{value}</span>
  </Pair>
);

const ScoreHead = ({ label, color, value, reset }: { label: string; color: string; value: number; reset?: boolean }) => (
  <Pair $h={44}>
    <PairLabel $bold>
      {label} <Info />
      {reset && <SideLink href="#reset">reset</SideLink>}
    </PairLabel>
    <ScoreBadge>
      <Dot $color={color} />
      {value}
    </ScoreBadge>
  </Pair>
);

const ScoreCard = () => (
  <Card>
    <SideHead $h={66}>
      <SideTitle>Score</SideTitle>
      <Info size={14} />
    </SideHead>
    <SideBody>
      <ScoreGroup $top={14} $bottom={14}>
        <ScoreHead label="Inherent" color={c.amber} value={10} />
        <InfoPair label="Likelihood" value="2 Unlikely" />
        <InfoPair label="Impact" value="5 Extreme" />
      </ScoreGroup>
      <ScoreGroup $top={14} $bottom={14}>
        <Pair $h={35}>
          <PairLabel $bold>
            Control Effectiveness <Info />
          </PairLabel>
          <span>3 Partially Effective</span>
        </Pair>
      </ScoreGroup>
      <ScoreGroup $top={18} $bottom={15}>
        <ScoreHead label="Residual" color={c.green} value={4} reset />
        <InfoPair label="Likelihood" value="2 Unlikely" />
        <InfoPair label="Impact" value="2 Minor" />
      </ScoreGroup>
      <ScoreGroup $top={14} $bottom={14}>
        <ScoreHead label="Target" color={c.green} value={4} />
        <InfoPair label="Likelihood" value="2 Unlikely" />
        <InfoPair label="Impact" value="2 Minor" />
      </ScoreGroup>
      <ScoreGroup $top={14} $bottom={14} $last>
        <Pair $h={35}>
          <PairLabel $bold>
            Velocity <Info />
          </PairLabel>
          <span>High</span>
        </Pair>
      </ScoreGroup>
    </SideBody>
  </Card>
);

const heat = ['gyorr', 'gyorr', 'ggyoo', 'bggyo', 'bbggo'];
const heatColor: Record<string, string> = { g: c.green, y: c.yellow, o: c.amber, r: c.red, b: c.blue };

const HeatmapCard = () => (
  <Card>
    <SideHead $h={66}>
      <SideTitle>Heatmap</SideTitle>
    </SideHead>
    <SideBody>
      <Heat>
        <AxisY>Likelihood</AxisY>
        <HeatGrid>
          {heat.flatMap((row, r) => row.split('').map((k, i) => <Cell key={`${r}-${i}`} $color={heatColor[k]} />))}
          <Marker $x={116} $y={293} $fade={0.4}>
            <Target />
          </Marker>
          <MarkerTag $x={61} $y={291} $fade={0.45}>
            Target
          </MarkerTag>
          <Marker $x={116} $y={275}>
            <svg width="18" height="18" viewBox="0 0 18 18">
              <circle cx="9" cy="9" r="9" fill="#404040" />
            </svg>
          </Marker>
          <MarkerTag $x={46} $y={272}>
            Residual
          </MarkerTag>
          <MarkerTag $x={299} $y={281} $fade={0.65}>
            Inherent
          </MarkerTag>
        </HeatGrid>
        <AxisX>Impact</AxisX>
      </Heat>
    </SideBody>
  </Card>
);

const log: string[][] = [
  ['2025-06-20 ...', 'Relation Created', 'Root Cause', ''],
  ['2025-06-17 ...', 'update', 'Likelihood', 'Possible'],
  ['2025-06-17 ...', 'update', 'Reduced Likelihood', 'Unlikely'],
  ['2025-06-17 ...', 'update', 'Target Impact', 'Moderate'],
  ['2025-06-17 ...', 'update', 'Inherent Value', '15'],
  ['2025-06-17 ...', 'update', 'Target Value', '6'],
  ['2025-06-17 ...', 'update', 'Effectiveness', 'Fully Effective'],
  ['2025-06-17 ...', 'update', 'Reduced Likelihood', 'Rare'],
  ['2025-06-13 ...', 'update', 'Override Likelihood', ''],
];

const Changelog = () => (
  <Card>
    <SideHead $h={66}>
      <SideTitle>Changelog</SideTitle>
    </SideHead>
    <SideBody>
      <LogView>
        <LogTable>
          <colgroup>
            <Col $w="60px" />
            <Col $w="100px" />
            <Col $w="150px" />
            <Col $w="150px" />
            <Col />
          </colgroup>
          <thead>
            <tr>
              {['User', 'Timestamp', 'Change Type', 'Changed Attribute', 'Old Attribute'].map((t) => (
                <LogTh key={t}>{t}</LogTh>
              ))}
            </tr>
          </thead>
          <tbody>
            {log.map((row, i) => (
              <tr key={i}>
                <LogTd $face>
                  <Avatar $small>AG</Avatar>
                </LogTd>
                {row.map((v, j) => (
                  <LogTd key={j} $bold={j === 2}>
                    {v}
                  </LogTd>
                ))}
              </tr>
            ))}
          </tbody>
        </LogTable>
      </LogView>
      <ScrollTrack aria-hidden>
        <Tri $dir="left" />
        <ScrollLane>
          <ScrollBar />
        </ScrollLane>
        <Tri $dir="right" />
      </ScrollTrack>
    </SideBody>
  </Card>
);

export default function App() {
  return (
    <>
      <GlobalStyle />
      <Header />
      <Frame>
        <Rail>
          <IconButton type="button" aria-label="Open sidebar">
            <ChevronRight w={8} h={14} weight={1.5} />
          </IconButton>
        </Rail>
        <Content>
          <Crumbs aria-label="Breadcrumb">
            <a href="#home">Home</a>
            <ChevronRight w={5} h={8} weight={1} />
            <a href="#risks">Risks</a>
            <ChevronRight w={5} h={8} weight={1} />
            <CrumbHere>Risk Details</CrumbHere>
          </Crumbs>
          <Columns>
            <MainCol>
              <SummaryCard />
              <Objectives />
              <BowTie />
              <Panel>
                <PanelHeader icon={<FaInfo size={14} />} title="Additional Information" />
              </Panel>
              <SubRisks />
              <ActionPlans />
              <Indicators />
              <Panel>
                <PanelHeader icon={<FaLink size={16} />} title="Linked Resources" note="3 Linked Resources" />
              </Panel>
              <Panel>
                <PanelHeader icon={<FaPencil size={14} />} title="Notes" note="5 Notes" />
              </Panel>
              <Created>Created on November 6, 2020 5:00 pm by Jason Doel</Created>
            </MainCol>
            <SideCol>
              <Card>
                <SideHead $h={52} $indent={14}>
                  <SideTitle>Assessment</SideTitle>
                </SideHead>
                <AssessBody>
                  <Pair $h={31}>
                    <span>Last Assessed Date</span>
                    <span>May 23, 2025 9:11 am</span>
                  </Pair>
                  <Pair $h={31}>
                    <span>Last Assessed By</span>
                    <span>Admin Greenborough</span>
                  </Pair>
                </AssessBody>
              </Card>
              <ScoreCard />
              <Card>
                <SideHead $h={78}>
                  <SideTitle>Thresholds</SideTitle>
                  <Info size={14} />
                  <SideLink href="#suppress">suppress</SideLink>
                  <SideLink href="#override">override thresholds</SideLink>
                </SideHead>
                <SideBody>
                  <ChartBox>
                    <ThresholdChart />
                  </ChartBox>
                </SideBody>
              </Card>
              <HeatmapCard />
              <Changelog />
            </SideCol>
          </Columns>
        </Content>
      </Frame>
      {[615, 1384, 2156, 2980].map((top) => (
        <PageScroll key={top} $top={top} aria-hidden>
          <Tri $dir="up" />
          <PageThumb />
        </PageScroll>
      ))}
      <ScrollEnd aria-hidden>
        <Tri $dir="down" />
      </ScrollEnd>
      <Language type="button">English</Language>
      <Chat type="button" aria-label="Open chat">
        <ChatIcon />
      </Chat>
    </>
  );
}
